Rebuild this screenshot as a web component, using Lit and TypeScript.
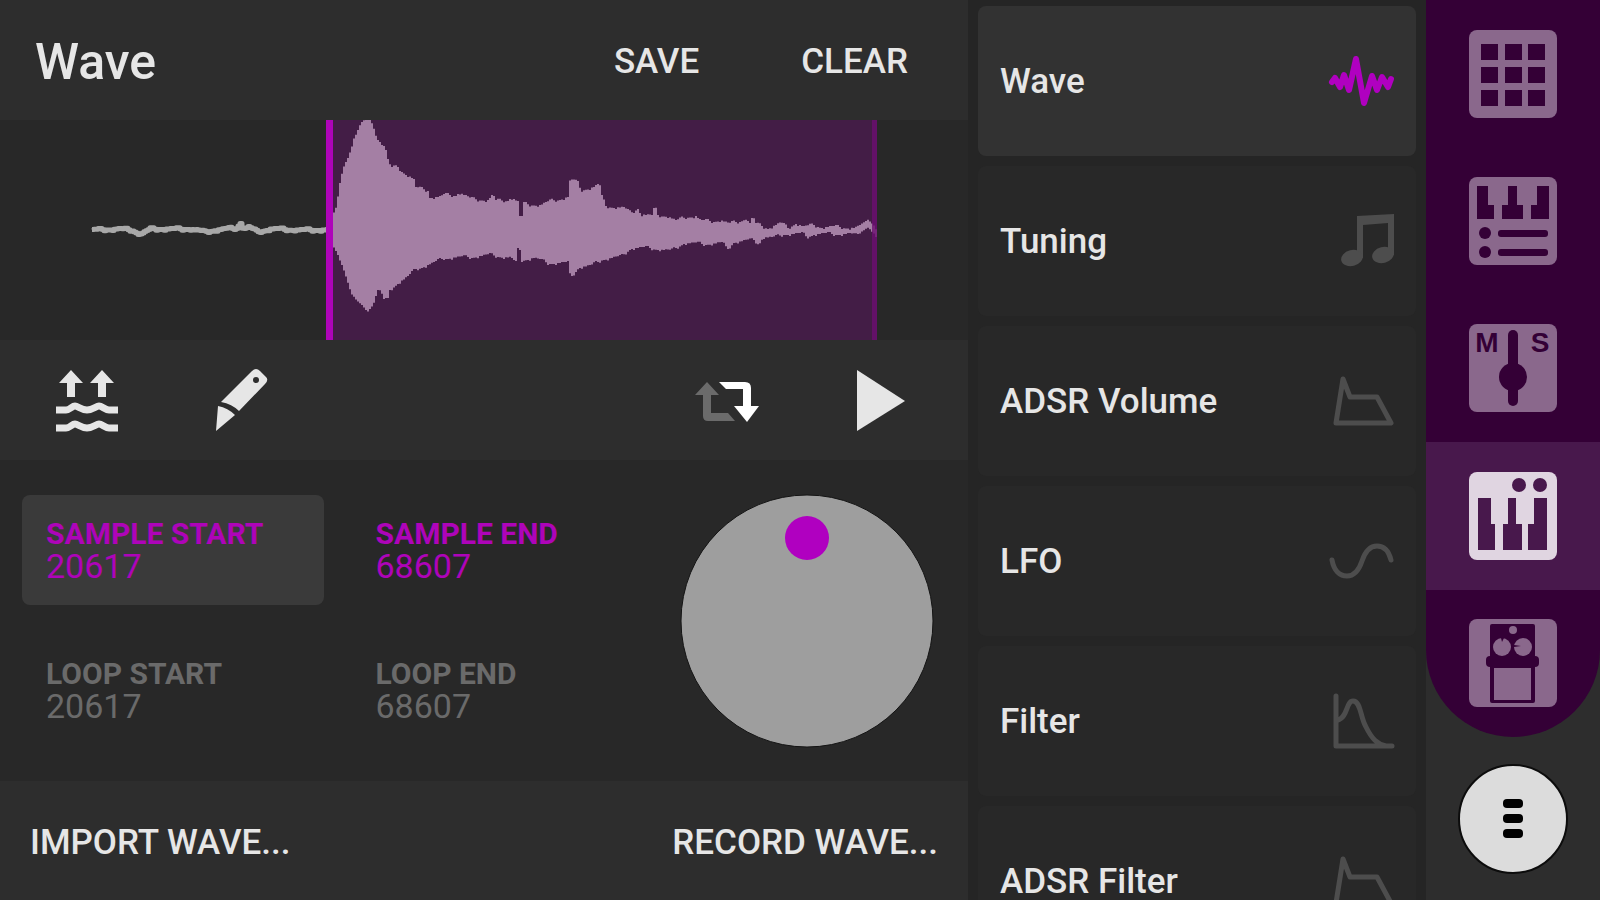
import { LitElement, html, svg, css } from "lit";
import { customElement, property, state } from "lit/decorators.js";
import { classMap } from "lit/directives/class-map.js";

type Point = [number, number];

/* Upper and lower outline of the recorded sample, in strip units (968 x 220). */
const UPPER: Point[] = [
  [331, 97], [336, 86], [338, 68], [342, 50], [345, 42], [348, 35], [351, 26], [353, 18], [357, 10],
  [360, 3], [364, 0], [370, 1], [373, 8], [376, 18], [382, 24], [385, 30], [387, 40], [390, 48],
  [397, 47], [402, 52], [410, 57], [413, 60], [415, 68], [427, 70], [429, 77], [440, 77], [443, 75],
  [455, 75], [458, 72], [463, 75], [470, 79], [487, 80], [492, 75], [495, 81], [507, 80], [510, 77],
  [517, 82], [518, 97], [521, 97], [523, 84], [540, 85], [550, 81], [567, 77], [568, 62], [572, 60],
  [577, 63], [580, 70], [593, 67], [597, 65], [600, 67], [601, 77], [605, 86], [623, 88], [630, 93],
  [637, 88], [640, 94], [651, 96], [654, 87], [657, 95], [667, 96], [675, 101], [685, 97], [695, 96],
  [700, 101], [713, 101], [720, 100], [728, 104], [742, 100], [746, 97], [748, 105], [752, 97],
  [755, 104], [767, 108], [780, 103], [787, 108], [795, 103], [803, 107], [813, 105], [820, 107],
  [840, 107], [853, 108], [862, 104], [867, 99], [873, 105], [877, 112],
];
const LOWER: Point[] = [
  [331, 125], [337, 135], [342, 147], [347, 162], [350, 173], [355, 180], [360, 185], [367, 191],
  [372, 185], [377, 170], [380, 172], [383, 180], [387, 180], [389, 170], [397, 163], [407, 157],
  [415, 149], [427, 145], [433, 143], [443, 138], [470, 137], [490, 135], [510, 138], [516, 144],
  [517, 130], [519, 130], [521, 140], [533, 138], [547, 143], [567, 143], [568, 155], [571, 156],
  [578, 147], [590, 146], [602, 139], [620, 137], [630, 128], [650, 128], [670, 131], [683, 123],
  [703, 124], [722, 123], [726, 130], [733, 122], [753, 120], [758, 124], [762, 117], [772, 118],
  [783, 114], [802, 114], [806, 117], [813, 114], [840, 114], [857, 114], [867, 107], [873, 114],
  [877, 121],
];
const QUIET: Point[] = [
  [92, 110], [118, 109], [131, 110], [140, 114], [150, 109], [170, 109], [190, 109], [204, 112], [215, 110],
  [236, 108], [240, 103], [243, 109], [248, 107], [257, 112], [270, 109], [300, 110], [328, 110],
];

const valueAt = (points: Point[], x: number): number => {
  for (let i = 1; i < points.length; i++) {
    const [x0, y0] = points[i - 1];
    const [x1, y1] = points[i];
    if (x <= x1) return y0 + ((y1 - y0) * (x - x0)) / (x1 - x0);
  }
  return points[points.length - 1][1];
};

/* Sample bars are two units wide, each with a small level variation. */
const NOISE = [0, 2, -1, 1, -2, 0, 1, -1, 2, 0, -1, 1, -2];
const trace = (points: Point[], amount: number, seed: number): string[] => {
  const out: string[] = [];
  const end = points[points.length - 1][0];
  for (let x = points[0][0], i = seed; x < end; x += 2, i++) {
    const scale = x < 375 || x > 850 ? 0.4 : 1;
    const y = (valueAt(points, x) + NOISE[(i * 5) % 13] * amount * scale).toFixed(1);
    out.push(`${x} ${y}`, `${x + 2} ${y}`);
  }
  return out;
};

const BODY_PATH = `M${trace(UPPER, 1, 0).join("L")}L${trace(LOWER, 1, 4).reverse().join("L")}Z`;
const QUIET_PATH = `M${trace(QUIET, 1.6, 2).join("L")}`;

const MODULE_ICONS: Record<string, unknown> = {
  wave: svg`<path class="line heavy" d="M2 33 5 29 10 38 14 26 19 41 26 10 34 54 42 27 47 41 52 28 58 38 61 30"/>`,
  tuning: svg`<path d="M27 7 64 5V46H58V14L33 16V49H27Z"/>
    <ellipse cx="22" cy="49" rx="11" ry="8" transform="rotate(-14 22 49)"/>
    <ellipse cx="53" cy="46" rx="11" ry="8" transform="rotate(-14 53 46)"/>`,
  adsr: svg`<path class="line" d="M6 54 13 10 20 28H47L61 54Z"/>`,
  lfo: svg`<path class="line" d="M2 31C4 42 10 47 17 47 26 47 30 38 32 32 35 23 39 17 47 17 55 17 59 23 61 31"/>`,
  filter: svg`<path class="line" d="M6 7V57H62M8 31C18 28 16 12 23 12 31 12 30 28 36 38 42 50 47 55 56 57"/>`,
};

const MODULES = [
  { id: "wave", label: "Wave", icon: "wave" },
  { id: "tuning", label: "Tuning", icon: "tuning" },
  { id: "adsr-volume", label: "ADSR Volume", icon: "adsr" },
  { id: "lfo", label: "LFO", icon: "lfo" },
  { id: "filter", label: "Filter", icon: "filter" },
  { id: "adsr-filter", label: "ADSR Filter", icon: "adsr" },
];

const RAIL_ICONS: Record<string, unknown> = {
  Pads: svg`${[12, 36, 59].map((x) => [14, 37, 60].map((y) => svg`<rect class="hole" x=${x} y=${y} width="17" height="16"/>`))}`,
  Tracks: svg`<path class="hole" d="M8 9H19V28H25V42H8Z M39 9H48V28H54V42H33V28H39Z M68 9H80V42H62V28H68Z"/>
    <circle class="hole" cx="16" cy="56" r="6"/><circle class="hole" cx="16" cy="75" r="6"/>
    <rect class="hole" x="29" y="53" width="50" height="7" rx="3"/><rect class="hole" x="29" y="72" width="50" height="7" rx="3"/>`,
  Mixer: svg`<text class="hole glyph" x="18" y="28">M</text><text class="hole glyph" x="71" y="28">S</text>
    <rect class="hole" x="39" y="6" width="10" height="76" rx="5"/><circle class="hole" cx="44" cy="53" r="14"/>`,
  Instrument: svg`<circle class="hole" cx="50" cy="13" r="7"/><circle class="hole" cx="71" cy="13" r="7"/>
    <path class="hole" d="M9 26H22V52H26V78H9Z M39 26H47V52H53V78H34V52H39Z M65 26H78V78H59V52H65Z"/>`,
  Effects: svg`<rect class="hole" x="21" y="5" width="45" height="79" rx="2"/><rect class="hole" x="17" y="37" width="53" height="11" rx="4"/>
    <rect class="tile" x="25" y="49" width="37" height="32"/>
    <circle class="tile" cx="33" cy="28" r="9"/><circle class="tile" cx="54" cy="28" r="9"/>
    <path class="hole" d="M32 19 33 23 35 19Z M45 26 52 27 45 28Z"/>
    <circle class="tile" cx="44" cy="11" r="4"/>`,
};

const base = css`
  *, *::before, *::after { box-sizing: border-box; }
  button {
    margin: 0;
    padding: 0;
    border: 0;
    background: none;
    color: inherit;
    font: inherit;
    cursor: pointer;
  }
  svg { display: block; overflow: visible; }
`;

@customElement("wave-strip")
class WaveStrip extends LitElement {
  static styles = [base, css`
    :host { display: block; min-height: 0; background: #282828; }
    .strip { width: 100%; height: 100%; overflow: hidden; }
    .selection { fill: #431d46; }
    .quiet { fill: none; stroke: #a8a8a8; stroke-width: 5; stroke-linejoin: round; }
    .body { fill: #a47fa4; }
    .start { fill: #ae04b9; }
    .end { fill: #6c0f70; opacity: 0.8; }
  `];
  render() {
    return html`<svg class="strip" viewBox="0 0 968 220" preserveAspectRatio="none" role="img" aria-label="Waveform">
      <rect class="selection" x="330" y="0" width="547" height="220"/>
      <path class="quiet" d=${QUIET_PATH}/>
      <path class="body" d=${BODY_PATH}/>
      <rect class="start" x="326" y="0" width="7" height="220"/>
      <rect class="end" x="872" y="0" width="5" height="220"/>
    </svg>`;
  }
}

@customElement("value-dial")
class ValueDial extends LitElement {
  @property({ type: Number }) value = 0;
  static styles = [base, css`
    :host { display: block; }
    .dial { display: grid; width: 252px; height: 252px; }
    .dial > * { grid-area: 1 / 1; }
    .range { width: 100%; height: 100%; margin: 0; opacity: 0; cursor: pointer; }
    .face { fill: #9e9e9e; stroke: #141414; stroke-width: 1; }
    .mark { fill: #b000c0; }
  `];
  render() {
    return html`<label class="dial">
      <svg viewBox="0 0 252 252" aria-hidden="true">
        <circle class="face" cx="126" cy="126" r="126"/>
        <circle class="mark" cx="126" cy="43" r="22"/>
      </svg>
      <input class="range" type="range" min="0" max="100" aria-label="Adjust value" .value=${String(this.value)}>
    </label>`;
  }
}

@customElement("wave-editor")
class WaveEditor extends LitElement {
  @state() private selected = "SAMPLE START";
  private params = [
    { label: "SAMPLE START", value: 20617, on: true },
    { label: "SAMPLE END", value: 68607, on: true },
    { label: "LOOP START", value: 20617, on: false },
    { label: "LOOP END", value: 68607, on: false },
  ];
  static styles = [base, css`
    :host {
      display: grid;
      grid-template-rows: 120px minmax(0, 220fr) 120px minmax(0, 321fr) 119px;
      min-width: 0;
      background: #2d2d2d;
      color: #e6e6e6;
      font-size: 35px;
      font-weight: 500;
    }
    .bar { display: flex; align-items: center; }
    .header { padding: 3px 60px 0 35px; gap: 102px; }
    .title { flex: 1; margin: 0; font-size: 50px; font-weight: 500; }
    .tools { padding: 0 55px; gap: 90px; }
    .spacer { flex: 1; }
    .footer { justify-content: space-between; padding: 3px 30px 0; }
    .icon { width: 64px; height: 64px; fill: #e6e6e6; }
    .dim { fill: #6b6b6b; }
    .bright { fill: #fff; }
    .cut { fill: #2d2d2d; }
    .swell { fill: none; stroke: #e6e6e6; stroke-width: 7; }
    .params { display: flex; align-items: flex-start; gap: 28px; padding: 35px 35px 0 22px; background: #282828; }
    .cells { flex: 1; display: grid; grid-template-columns: 1fr 1fr; grid-auto-rows: 110px; gap: 30px 28px; }
    .cell {
      display: flex;
      flex-direction: column;
      justify-content: center;
      padding: 0 24px;
      border-radius: 8px;
      color: #6a6a6a;
      text-align: left;
    }
    .cell.on { color: #ae04b9; }
    .cell.selected { background: #3a3a3a; }
    .name { font-size: 30px; line-height: 33px; font-weight: 700; }
    .value { font-size: 34px; line-height: 33px; font-weight: 400; }
  `];
  render() {
    return html`
      <header class="bar header">
        <h1 class="title">Wave</h1>
        <button>SAVE</button>
        <button>CLEAR</button>
      </header>
      <wave-strip></wave-strip>
      <div class="bar tools">
        <button aria-label="Normalize"><svg class="icon" viewBox="0 0 64 64">
          <path d="M16 2 28 15H20V29H12V15H4Z M47 2 59 15H51V29H43V15H35Z"/>
          <path class="swell" d="M1 42H11C15 42 17 38 20 38S26 42 32 42 41 38 44 38 50 42 54 42H63"/>
          <path class="swell" d="M1 60H11C15 60 17 56 20 56S26 60 32 60 41 56 44 56 50 60 54 60H63"/>
        </svg></button>
        <button aria-label="Edit"><svg class="icon" viewBox="0 0 64 64">
          <path d="M43 3Q47-1 51 3L57 9Q60 12 56 16L30 43Q23 36 12 34Z M9 38Q19 40 26 47L7 63Z"/>
          <circle class="cut" cx="47" cy="12" r="3"/>
        </svg></button>
        <span class="spacer"></span>
        <button aria-label="Loop"><svg class="icon" viewBox="0 0 64 64">
          <path class="dim" d="M12 14 24 27H16V45H33L40 53H13Q8 53 8 48V27H0Z"/>
          <path class="bright" d="M24 14H50Q56 14 56 20V38H64L52 54 39 38H48V21H31Z"/>
        </svg></button>
        <button aria-label="Play"><svg class="icon" viewBox="0 0 64 64"><path d="M8 2 56 33 8 63Z"/></svg></button>
      </div>
      <section class="params">
        <div class="cells">
          ${this.params.map((p) => html`<button
            class=${classMap({ cell: true, on: p.on, selected: this.selected === p.label })}
            @click=${() => (this.selected = p.label)}>
            <span class="name">${p.label}</span><span class="value">${p.value}</span>
          </button>`)}
        </div>
        <value-dial value="50"></value-dial>
      </section>
      <footer class="bar footer">
        <button>IMPORT WAVE...</button>
        <button>RECORD WAVE...</button>
      </footer>`;
  }
}

@customElement("module-list")
class ModuleList extends LitElement {
  @state() private active = "wave";
  static styles = [base, css`
    :host {
      display: flex;
      flex-direction: column;
      gap: 10px;
      min-height: 0;
      overflow: hidden;
      padding: 6px 10px;
      background: #252525;
      color: #e6e6e6;
    }
    .card {
      display: flex;
      flex: none;
      align-items: center;
      justify-content: space-between;
      height: 150px;
      padding: 0 22px;
      border-radius: 8px;
      background: #282828;
      font-size: 35px;
      font-weight: 500;
    }
    .icon { width: 64px; height: 64px; fill: #4d4d4d; stroke: #4d4d4d; stroke-width: 0; }
    .line { fill: none; stroke-width: 5; stroke-linejoin: round; stroke-linecap: round; }
    .heavy { stroke-width: 6; }
    .active { background: #323232; }
    .active .icon { fill: #b000c0; stroke: #b000c0; }
  `];
  render() {
    return MODULES.map((m) => html`<button
      class=${classMap({ card: true, active: this.active === m.id })}
      @click=${() => (this.active = m.id)}>
      <span>${m.label}</span>
      <svg class="icon" viewBox="0 0 64 64" aria-hidden="true">${MODULE_ICONS[m.icon]}</svg>
    </button>`);
  }
}

@customElement("side-rail")
class SideRail extends LitElement {
  @state() private active = "Instrument";
  static styles = [base, css`
    :host { display: flex; flex-direction: column; background: #2d2d2d; }
    .nav {
      flex: 1;
      display: grid;
      grid-auto-rows: 1fr;
      overflow: hidden;
      border-radius: 0 0 87px 87px;
      background: #340036;
    }
    .item { display: grid; place-items: center; }
    .item .icon { width: 88px; height: 88px; }
    .tile { fill: #8a688c; }
    .hole { fill: #340036; }
    .glyph { font: 700 28px "Liberation Sans", Arial, sans-serif; text-anchor: middle; }
    .active { background: #48184c; }
    .active .tile { fill: #e0d5e1; }
    .active .hole { fill: #48184c; }
    .more { display: grid; place-items: center; height: 163px; }
    .menu {
      display: grid;
      align-content: center;
      justify-items: center;
      gap: 6px;
      width: 110px;
      height: 110px;
      border: 2px solid #0c0c0c;
      border-radius: 50%;
      background: #dcdcdc;
    }
    .pill { width: 20px; height: 9px; border-radius: 4px; background: #000; }
  `];
  render() {
    return html`
      <nav class="nav">
        ${Object.keys(RAIL_ICONS).map((name) => html`<button
          class=${classMap({ item: true, active: this.active === name })}
          aria-label=${name}
          @click=${() => (this.active = name)}>
          <svg class="icon" viewBox="0 0 88 88">
            <rect class="tile" width="88" height="88" rx="8"/>
            ${RAIL_ICONS[name]}
          </svg>
        </button>`)}
      </nav>
      <div class="more">
        <button class="menu" aria-label="Menu"><span class="pill"></span><span class="pill"></span><span class="pill"></span></button>
      </div>`;
  }
}

@customElement("app-root")
class AppRoot extends LitElement {
  static styles = css`
    :host {
      display: grid;
      grid-template-columns: minmax(0, 1fr) 458px 174px;
      grid-template-rows: minmax(0, 1fr);
      height: 100vh;
      overflow: hidden;
      background: #252525;
      font-family: Roboto, "Liberation Sans", sans-serif;
    }
  `;
  render() {
    return html`<wave-editor></wave-editor><module-list></module-list><side-rail></side-rail>`;
  }
}
